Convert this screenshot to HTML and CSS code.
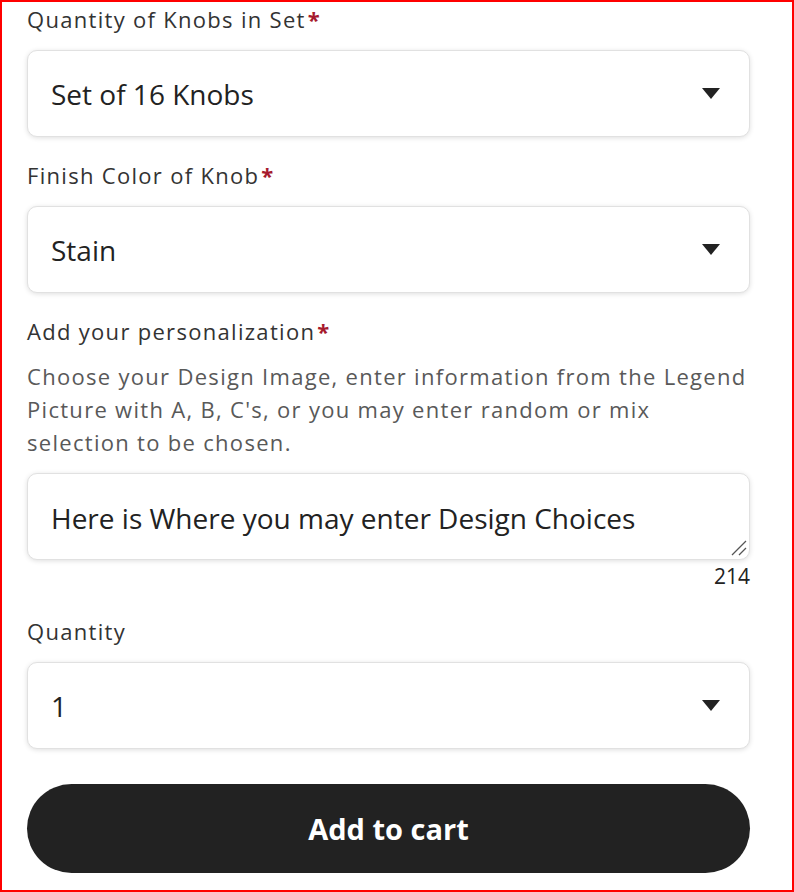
FILE: index.html
```html
<!DOCTYPE html>
<html lang="en">
<head>
<meta charset="utf-8">
<title>Personalize</title>
<link rel="stylesheet" href="styles.css">
</head>
<body>
<div class="frame">
  <form class="form">
    <div class="field">
      <label class="label">Quantity of Knobs in Set<span class="req">*</span></label>
      <div class="select">
        <span class="value">Set of 16 Knobs</span>
        <svg class="caret" width="18" height="11" viewBox="0 0 18 11"><path d="M0 0H18L9 11Z" fill="#222"/></svg>
      </div>
    </div>
    <div class="field">
      <label class="label">Finish Color of Knob<span class="req">*</span></label>
      <div class="select">
        <span class="value">Stain</span>
        <svg class="caret" width="18" height="11" viewBox="0 0 18 11"><path d="M0 0H18L9 11Z" fill="#222"/></svg>
      </div>
    </div>
    <div class="field personal">
      <label class="label">Add your personalization<span class="req">*</span></label>
      <p class="desc">Choose your Design Image, enter information from the Legend Picture with A, B, C's, or you may enter random or mix selection to be chosen.</p>
      <div class="ta-wrap">
        <textarea class="textarea" rows="1">Here is Where you may enter Design Choices</textarea>
        <svg class="grip" width="16" height="16" viewBox="0 0 16 16"><path d="M15 1L1 15M15 8L8 15" stroke="#555" stroke-width="1.3" fill="none"/></svg>
      </div>
      <div class="count">214</div>
    </div>
    <div class="field qty">
      <label class="label">Quantity</label>
      <div class="select">
        <span class="value">1</span>
        <svg class="caret" width="18" height="11" viewBox="0 0 18 11"><path d="M0 0H18L9 11Z" fill="#222"/></svg>
      </div>
    </div>
    <button type="button" class="cart">Add to cart</button>
  </form>
</div>
</body>
</html>
```

FILE: styles.css
```css
* { box-sizing: border-box; }
html, body { margin: 0; padding: 0; background: #fff; }
body { font-family: "Open Sans", "Noto Sans", sans-serif; color: #222; }

.frame {
  width: 794px;
  height: 892px;
  border: 2px solid #f00;
  padding: 3px 42px 0 25px;
  overflow: hidden;
}

.form { display: flex; flex-direction: column; }

.field { display: flex; flex-direction: column; }
.field + .field { margin-top: 24px; }
.field.qty { margin-top: 29px; }

.label {
  font-size: 22px;
  line-height: 28px;
  letter-spacing: 1.3px;
  color: #333;
  margin-bottom: 17px;
}
.req { color: #a61a2e; margin-left: 2px; font-weight: 700; letter-spacing: 0; }

.select {
  height: 87px;
  border: 1px solid #e1e1e1;
  border-radius: 10px;
  box-shadow: 0 1px 5px rgba(0,0,0,0.13);
  background: #fff;
  display: flex;
  align-items: center;
  justify-content: space-between;
  padding: 0 29px 0 23px;
}
.value { font-size: 28px; line-height: 36px; color: #222; }
.caret { display: block; }

.personal .label { margin-bottom: 15px; }
.desc {
  margin: 0 0 14px;
  font-size: 22px;
  line-height: 33px;
  letter-spacing: 1.3px;
  color: #595959;
}
.ta-wrap { position: relative; }
.textarea {
  display: block;
  width: 100%;
  height: 87px;
  border: 1px solid #e1e1e1;
  border-radius: 10px;
  box-shadow: 0 1px 5px rgba(0,0,0,0.13);
  padding: 26px 23px 0;
  font-family: inherit;
  font-size: 28px;
  line-height: 36px;
  color: #222;
  resize: none;
  overflow: hidden;
  outline: none;
}
.grip {
  position: absolute;
  right: 3px;
  bottom: 4px;
  display: block;
  pointer-events: none;
}
.count {
  margin-top: 4px;
  text-align: right;
  font-size: 21px;
  line-height: 24px;
  color: #222;
}

.cart {
  margin-top: 35px;
  height: 89px;
  width: 100%;
  border: 0;
  border-radius: 45px;
  background: #222;
  color: #fff;
  font-family: inherit;
  font-size: 29px;
  font-weight: 700;
}
```
